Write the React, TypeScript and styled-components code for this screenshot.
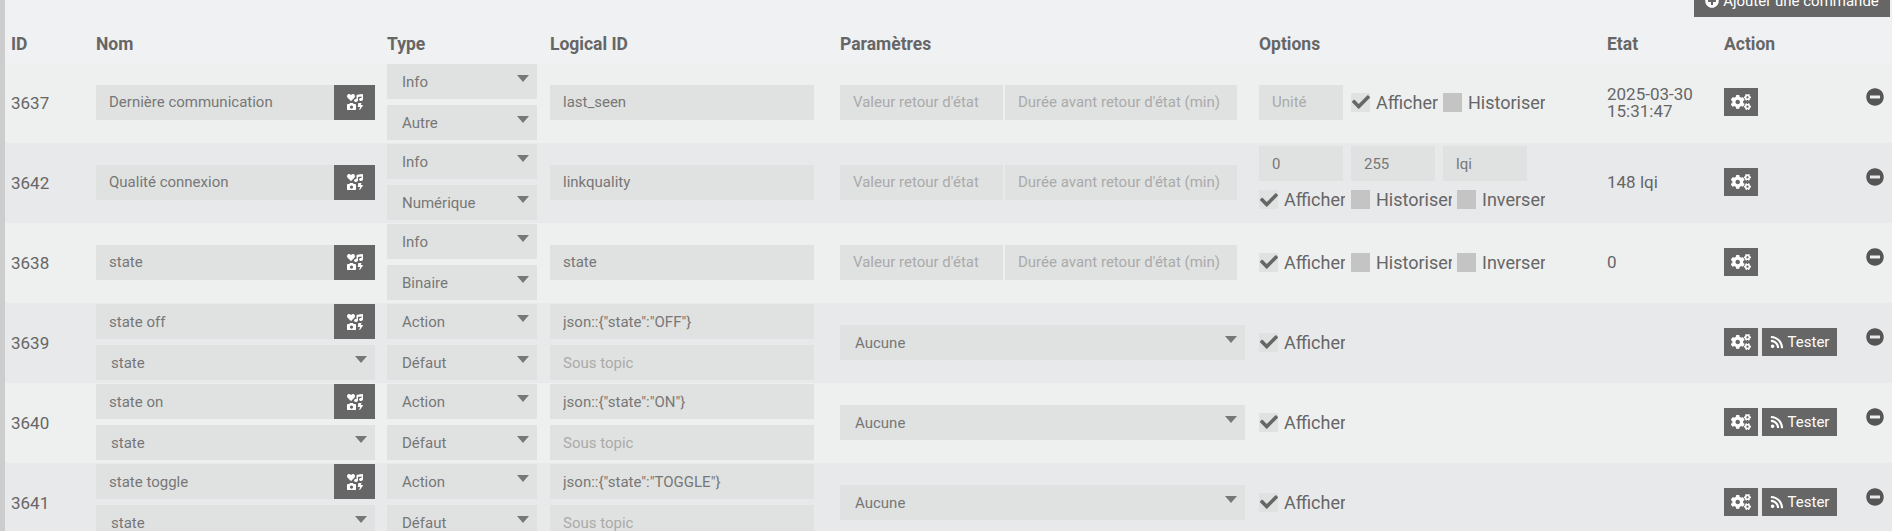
import React from 'react';
import styled, { createGlobalStyle } from 'styled-components';
import { FaIcons, FaCogs, FaRss, FaMinusCircle, FaPlusCircle, FaCheck } from 'react-icons/fa';

const Global = createGlobalStyle`
  html, body { margin: 0; padding: 0; height: 100%; overflow: hidden; background: #eff1f3; }
  body { font-family: Roboto, "Liberation Sans", sans-serif; color: #666; }
  * { box-sizing: border-box; }
`;

const Page = styled.div`
  height: 531px;
  border-left: 5px solid #cdcdcd;
  overflow: hidden;
`;
const TopBar = styled.div`
  height: 17px;
  display: flex;
  justify-content: flex-end;
  align-items: flex-end;
  padding-right: 2px;
`;
const AddButton = styled.button`
  flex: none;
  width: 196px;
  height: 32px;
  border: 0;
  background: #666;
  color: #fff;
  font: 400 15px Roboto, sans-serif;
  display: flex;
  align-items: center;
  justify-content: center;
  gap: 4px;
  padding: 0;
`;
const columns = '91px 291px 163px 290px 419px 348px 117px 142px 1fr';
const HeadRow = styled.div`
  height: 46px;
  display: grid;
  grid-template-columns: ${columns};
  align-items: center;
  padding-top: 8px;
`;
const HeadCell = styled.div<{ $pad?: number }>`
  font-weight: 700;
  font-size: 17.5px;
  color: #666;
  padding-left: ${p => p.$pad ?? 0}px;
`;
const Row = styled.div<{ $alt: boolean }>`
  height: 80px;
  padding-bottom: 2px;
  display: grid;
  grid-template-columns: ${columns};
  align-items: center;
  background: ${p => (p.$alt ? '#e8e9eb' : '#eef0f0')};
`;
const IdCell = styled.div`
  font-size: 17px;
  padding: 2px 0 0 6px;
  color: #666;
`;
const Stack = styled.div<{ $w: number }>`
  width: ${p => p.$w}px;
  display: flex;
  flex-direction: column;
  gap: 6px;
`;
const Field = styled.input<{ $w?: number }>`
  display: block;
  width: ${p => (p.$w ? `${p.$w}px` : '100%')};
  min-width: 0;
  flex: none;
  height: 35px;
  border: 0;
  border-radius: 0;
  outline: 0;
  background: #e0e2e1;
  color: #777;
  font: 400 15px Roboto, sans-serif;
  padding: 0 6px 0 13px;
  &::placeholder { color: #aaa; opacity: 1; }
`;
const GrowField = styled(Field)`
  flex: 1 1 0;
`;
const NameGroup = styled.div`
  display: flex;
  height: 35px;
`;
const IconTile = styled.button`
  flex: none;
  width: 41px;
  height: 35px;
  border: 0;
  padding: 0;
  background: #666;
  color: #fff;
  font-size: 16px;
  display: flex;
  align-items: center;
  justify-content: center;
`;
const SelectWrap = styled.div<{ $w?: number }>`
  position: relative;
  width: ${p => (p.$w ? `${p.$w}px` : '100%')};
  height: 35px;
  &::after {
    content: '';
    position: absolute;
    top: 11px;
    right: 8px;
    border-style: solid;
    border-width: 7px 6.5px 0;
    border-color: #777 transparent transparent;
  }
`;
const SelectBox = styled.select`
  display: block;
  width: 100%;
  height: 35px;
  appearance: none;
  border: 0;
  border-radius: 0;
  outline: 0;
  background: #e0e2e1;
  color: #777;
  font: 400 15px Roboto, sans-serif;
  padding: 1px 0 0 15px;
`;
const Params = styled.div`
  width: 397px;
  display: flex;
  gap: 2px;
`;
const OptionsCell = styled.div<{ $lift?: boolean }>`
  display: flex;
  flex-direction: column;
  gap: 8px;
  padding-bottom: ${p => (p.$lift ? 8 : 0)}px;
`;
const OptionsLine = styled.div`
  display: flex;
  align-items: center;
`;
const InputRow = styled.div`
  display: flex;
  gap: 8px;
`;
const Check = styled.label<{ $w: number; $ml: number }>`
  display: flex;
  align-items: center;
  gap: 6px;
  width: ${p => p.$w}px;
  margin-left: ${p => p.$ml}px;
  font-size: 18px;
  color: #666;
  overflow: hidden;
  white-space: nowrap;
  flex: none;
`;
const Box = styled.span<{ $on: boolean }>`
  flex: none;
  width: 19px;
  height: 19px;
  background: ${p => (p.$on ? '#e0e2e1' : '#c4c4c4')};
  color: #666;
  display: flex;
  align-items: center;
  justify-content: center;
  font-size: 18px;
`;
const EtatCell = styled.div`
  font-size: 17px;
  line-height: 17px;
  padding-top: 1px;
  color: #666;
`;
const ActionCell = styled.div`
  display: flex;
  gap: 4px;
`;
const SmallButton = styled.button<{ $w: number }>`
  width: ${p => p.$w}px;
  height: 28px;
  border: 0;
  padding: 0;
  background: #666;
  color: #fff;
  font: 400 15px Roboto, sans-serif;
  display: flex;
  align-items: center;
  justify-content: center;
  gap: 4px;
`;
const RemoveCell = styled.div`
  align-self: start;
  padding-top: 25px;
  font-size: 18px;
  line-height: 18px;
  color: #555;
  display: flex;
`;

const Select = ({ value, w }: { value: string; w?: number }) => (
  <SelectWrap $w={w}>
    <SelectBox defaultValue={value}>
      <option>{value}</option>
    </SelectBox>
  </SelectWrap>
);

const Opt = ({ label, on, w, ml }: { label: string; on?: boolean; w: number; ml: number }) => (
  <Check $w={w} $ml={ml}>
    <Box $on={!!on}>{on && <FaCheck />}</Box>
    {label}
  </Check>
);

const Name = ({ value }: { value: string }) => (
  <NameGroup>
    <GrowField defaultValue={value} />
    <IconTile><FaIcons /></IconTile>
  </NameGroup>
);

const RetourParams = () => (
  <Params>
    <Field $w={163} placeholder="Valeur retour d'état" />
    <GrowField placeholder="Durée avant retour d'état (min)" />
  </Params>
);

const Gear = () => (
  <SmallButton $w={34}><FaCogs size={20} /></SmallButton>
);

const Remove = () => (
  <RemoveCell><FaMinusCircle /></RemoveCell>
);

const infoRows = [
  { id: '3637', name: 'Dernière communication', sub: 'Autre', logical: 'last_seen' },
  { id: '3642', name: 'Qualité connexion', sub: 'Numérique', logical: 'linkquality' },
  { id: '3638', name: 'state', sub: 'Binaire', logical: 'state' },
];
const actionRows = [
  { id: '3639', name: 'state off', value: 'json::{"state":"OFF"}' },
  { id: '3640', name: 'state on', value: 'json::{"state":"ON"}' },
  { id: '3641', name: 'state toggle', value: 'json::{"state":"TOGGLE"}' },
];

const ThreeChecks = () => (
  <OptionsLine>
    <Opt label="Afficher" on w={86} ml={0} />
    <Opt label="Historiser" w={101} ml={6} />
    <Opt label="Inverser" w={88} ml={5} />
  </OptionsLine>
);

export default function App() {
  return (
    <Page>
      <Global />
      <TopBar>
        <AddButton><FaPlusCircle size={14} /> Ajouter une commande</AddButton>
      </TopBar>
      <HeadRow>
        <HeadCell $pad={6}>ID</HeadCell>
        <HeadCell>Nom</HeadCell>
        <HeadCell>Type</HeadCell>
        <HeadCell>Logical ID</HeadCell>
        <HeadCell>Paramètres</HeadCell>
        <HeadCell>Options</HeadCell>
        <HeadCell>Etat</HeadCell>
        <HeadCell>Action</HeadCell>
      </HeadRow>
      {infoRows.map((r, i) => (
        <Row key={r.id} $alt={i === 1}>
          <IdCell>{r.id}</IdCell>
          <Stack $w={279}><Name value={r.name} /></Stack>
          <Stack $w={150}>
            <Select value="Info" />
            <Select value={r.sub} />
          </Stack>
          <Stack $w={264}><Field defaultValue={r.logical} /></Stack>
          <RetourParams />
          <OptionsCell $lift={i === 1}>
            {i === 0 && (
              <OptionsLine>
                <Field $w={84} placeholder="Unité" />
                <Opt label="Afficher" on w={87} ml={8} />
                <Opt label="Historiser" w={102} ml={5} />
              </OptionsLine>
            )}
            {i === 1 && (
              <>
                <InputRow>
                  <Field $w={84} defaultValue="0" />
                  <Field $w={84} defaultValue="255" />
                  <Field $w={84} defaultValue="lqi" />
                </InputRow>
                <ThreeChecks />
              </>
            )}
            {i === 2 && <ThreeChecks />}
          </OptionsCell>
          <EtatCell>
            {i === 0 && <>2025-03-30<br />15:31:47</>}
            {i === 1 && '148 lqi'}
            {i === 2 && '0'}
          </EtatCell>
          <ActionCell><Gear /></ActionCell>
          <Remove />
        </Row>
      ))}
      {actionRows.map((r, i) => (
        <Row key={r.id} $alt={i !== 1}>
          <IdCell>{r.id}</IdCell>
          <Stack $w={279}>
            <Name value={r.name} />
            <Select value="state" />
          </Stack>
          <Stack $w={150}>
            <Select value="Action" />
            <Select value="Défaut" />
          </Stack>
          <Stack $w={264}>
            <Field defaultValue={r.value} />
            <Field placeholder="Sous topic" />
          </Stack>
          <Select value="Aucune" w={405} />
          <OptionsCell>
            <OptionsLine><Opt label="Afficher" on w={86} ml={0} /></OptionsLine>
          </OptionsCell>
          <EtatCell />
          <ActionCell>
            <Gear />
            <SmallButton $w={75}><FaRss size={14} /> Tester</SmallButton>
          </ActionCell>
          <Remove />
        </Row>
      ))}
    </Page>
  );
}
